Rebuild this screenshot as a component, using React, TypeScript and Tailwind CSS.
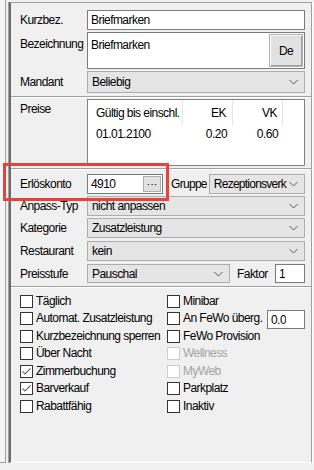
import React from "react";

const font = "font-['Liberation_Sans',Arial,sans-serif] text-[12px] tracking-[-0.55px]";

function Chevron() {
  return (
    <svg width="9" height="6" viewBox="0 0 9 6" className="shrink-0">
      <path d="M0.5 1 L4.5 5 L8.5 1" fill="none" stroke="#5a5a5a" strokeWidth="1" />
    </svg>
  );
}

function Combo({ value, className = "", textClass = "" }: { value: string; className?: string; textClass?: string }) {
  return (
    <div className={"flex h-full min-w-0 items-center gap-[2px] border border-[#adadad] bg-[#e5e5e5] pl-[4px] pr-[6px] " + className}>
      <span className={"min-w-0 flex-1 overflow-hidden whitespace-nowrap " + textClass}>{value}</span>
      <Chevron />
    </div>
  );
}

function TextBox({ value, className = "" }: { value: string; className?: string }) {
  return (
    <div className={"flex h-full items-center border border-[#7a7a7a] bg-white pl-[3px] " + className}>
      <span className="overflow-hidden whitespace-nowrap">{value}</span>
    </div>
  );
}

function Row({ label, children, className = "" }: { label: string; children: React.ReactNode; className?: string }) {
  return (
    <div className={"flex items-center " + className}>
      <div className="w-[67px] shrink-0 whitespace-nowrap">{label}</div>
      <div className="flex h-full min-w-0 flex-1 items-center">{children}</div>
    </div>
  );
}

function Separator({ className = "" }: { className?: string }) {
  return (
    <div className={"-ml-[9px] -mr-[6px] " + className}>
      <div className="h-px bg-[#a0a0a0]" />
      <div className="h-px bg-white" />
    </div>
  );
}

function Check({ label, checked, disabled }: { label: string; checked?: boolean; disabled?: boolean }) {
  return (
    <div className="flex h-[13px] items-center gap-[3px] whitespace-nowrap">
      <div
        className={
          "flex h-[13px] w-[13px] shrink-0 items-center justify-center bg-white border " +
          (disabled ? "border-[#cccccc]" : "border-[#333333]")
        }
      >
        {checked && (
          <svg width="11" height="11" viewBox="0 0 11 11">
            <path d="M1.5 5.5 L4 8 L9.5 2.5" fill="none" stroke="#6a6a6a" strokeWidth="1.1" />
          </svg>
        )}
      </div>
      <span className={"leading-[13px] " + (disabled ? "text-[#a3a3a3]" : "text-black")}>{label}</span>
    </div>
  );
}

export default function App() {
  const checks: [React.ReactNode, React.ReactNode, string][] = [
    [<Check label="Täglich" />, <Check label="Minibar" />, "h-[17px]"],
    [
      <Check label="Automat. Zusatzleistung" />,
      <div className="flex items-start">
        <Check label="An FeWo überg." />
        <div className="ml-auto -mt-[2px] h-[19px] w-[38px]">
          <TextBox value="0.0" />
        </div>
      </div>,
      "h-[18px]",
    ],
    [<Check label="Kurzbezeichnung sperren" />, <Check label="FeWo Provision" />, "h-[17px]"],
    [<Check label="Über Nacht" />, <Check label="Wellness" disabled />, "h-[18px]"],
    [<Check label="Zimmerbuchung" checked />, <Check label="MyWeb" disabled />, "h-[17px]"],
    [<Check label="Barverkauf" checked />, <Check label="Parkplatz" />, "h-[18px]"],
    [<Check label="Rabattfähig" />, <Check label="Inaktiv" />, "h-[17px]"],
  ];

  return (
    <div className={"relative flex h-[470px] w-[314px] overflow-hidden bg-[#f0f0f0] text-black " + font}>
      {/* left strip */}
      <div className="h-[463px] w-[6px] shrink-0 border-r border-b border-[#a0a0a0] bg-[#f7f7f7]" />

      {/* main panel */}
      <div className="ml-[3px] mt-[2px] h-[461px] w-[303px] shrink-0 border-t border-r border-b border-l-2 border-t-[#a0a0a0] border-r-[#a0a0a0] border-b-white border-l-[#6b6b6b] pl-[9px] pr-[6px] pt-[7px] shadow-[-1px_0_0_#a0a0a0,1px_0_0_#ffffff]">
        <Row label="Kurzbez." className="h-[20px]">
          <TextBox value="Briefmarken" className="flex-1" />
        </Row>

        <div className="mt-[2px] flex h-[37px] items-start">
          <div className="w-[67px] shrink-0 pt-[3px]">Bezeichnung</div>
          <div className="flex h-full flex-1 border border-[#7a7a7a] bg-white p-px">
            <span className="flex-1 pl-[2px] pt-[2px]">Briefmarken</span>
            <div className="flex w-[34px] items-center justify-center border border-[#adadad] bg-[#e1e1e1] shadow-[inset_1px_1px_0_#ffffff,inset_-1px_-1px_0_#a0a0a0]">
              De
            </div>
          </div>
        </div>

        <Row label="Mandant" className="mt-[2px] h-[22px]">
          <Combo value="Beliebig" className="flex-1" />
        </Row>

        <Separator className="mt-[3px]" />

        <div className="mt-px flex h-[67px] items-start">
          <div className="w-[67px] shrink-0 pt-[1px]">Preise</div>
          <div className="h-full flex-1 border border-[#828282] bg-white">
            <div className="flex h-[25px] items-center">
              <div className="flex h-full w-[95px] items-center border-r border-[#e5e5e5] pl-[8px] whitespace-nowrap">Gültig bis einschl.</div>
              <div className="flex h-full w-[50px] items-center justify-end border-r border-[#e5e5e5] pr-[6px]">EK</div>
              <div className="flex h-full w-[50px] items-center justify-end border-r border-[#e5e5e5] pr-[5px]">VK</div>
            </div>
            <div className="flex h-[17px] items-center">
              <div className="w-[95px] pl-[8px]">01.01.2100</div>
              <div className="w-[50px] pr-[6px] text-right">0.20</div>
              <div className="w-[50px] pr-[5px] text-right">0.60</div>
            </div>
          </div>
        </div>

        <Separator className="mt-[2px]" />

        <Row label="Erlöskonto" className="mt-[4px] h-[20px]">
          <div className="flex h-full w-[76px] shrink-0 items-center border border-[#7a7a7a] bg-white pl-[3px] pr-px">
            <span className="flex-1">4910</span>
            <div className="flex h-[16px] w-[18px] items-center justify-center border border-[#adadad] bg-[#e1e1e1] text-[11px] leading-none tracking-normal">
              ···
            </div>
          </div>
          <span className="ml-[8px] whitespace-nowrap tracking-[-0.7px]">Gruppe</span>
          <Combo value="Rezeptionsverk" className="ml-[2px] flex-1 pl-[3px] pr-[5px]" textClass="tracking-[-0.75px]" />
        </Row>

        <Row label="Anpass-Typ" className="mt-[2px] h-[20px]">
          <Combo value="nicht anpassen" className="flex-1" />
        </Row>
        <Row label="Kategorie" className="mt-[2px] h-[20px]">
          <Combo value="Zusatzleistung" className="flex-1" />
        </Row>
        <Row label="Restaurant" className="mt-[3px] h-[20px]">
          <Combo value="kein" className="flex-1" />
        </Row>
        <Row label="Preisstufe" className="mt-[3px] h-[19px]">
          <Combo value="Pauschal" className="w-[143px] shrink-0" />
          <span className="ml-[7px]">Faktor</span>
          <TextBox value="1" className="ml-auto w-[30px]" />
        </Row>

        <Separator className="mt-[3px]" />

        <div className="mt-[7px]">
          {checks.map(([a, b, h], i) => (
            <div key={i} className={"flex items-start " + h}>
              <div className="w-[147px] shrink-0">{a}</div>
              <div className="flex-1">{b}</div>
            </div>
          ))}
        </div>
      </div>

      {/* highlight annotation */}
      <div className="absolute left-[3px] top-[163px] h-[38px] w-[166px] border-[3px] border-[#e8413c]" />
    </div>
  );
}
